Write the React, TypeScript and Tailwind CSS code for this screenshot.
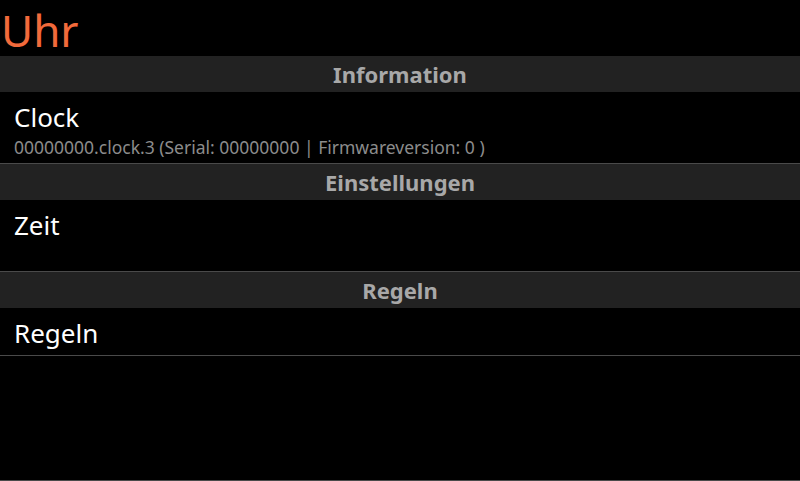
import React from "react";

const font = { fontFamily: '"Noto Sans", "Open Sans", sans-serif' };

function SectionHeader({ label }: { label: string }) {
  return (
    <div className="flex h-9 items-center justify-center bg-[#222222]">
      <span className="text-[22px] font-bold leading-9 text-[#a8a8a8]">{label}</span>
    </div>
  );
}

function Item({
  title,
  subtitle,
  height,
}: {
  title: string;
  subtitle?: string;
  height: string;
}) {
  return (
    <div className={`flex flex-col border-b border-[#4a4a4a] px-[14px] pt-[10px] ${height}`}>
      <span className="text-[26px] leading-[30px] text-white">{title}</span>
      {subtitle && (
        <span className="mt-[4px] text-[17.5px] leading-[22px] text-[#8c8c8c]">{subtitle}</span>
      )}
    </div>
  );
}

export default function App() {
  return (
    <div className="flex h-[481px] w-[800px] flex-col bg-black" style={font}>
      <div className="flex h-14 items-center pl-[1px]">
        <span className="pt-[4px] text-[44px] leading-[52px] text-[#f26a3b]">Uhr</span>
      </div>
      <SectionHeader label="Information" />
      <Item
        title="Clock"
        subtitle="00000000.clock.3 (Serial: 00000000 | Firmwareversion: 0 )"
        height="h-[72px]"
      />
      <SectionHeader label="Einstellungen" />
      <Item title="Zeit" height="h-[72px]" />
      <SectionHeader label="Regeln" />
      <Item title="Regeln" height="h-[48px]" />
      <div className="flex-1 border-b border-[#4a4a4a]" />
    </div>
  );
}
